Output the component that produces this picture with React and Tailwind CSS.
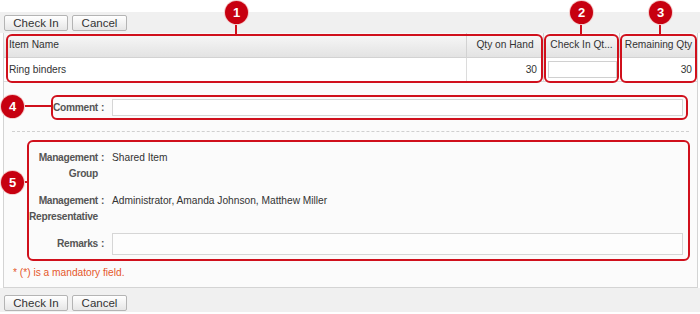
import React from "react";

const font = { fontFamily: '"Liberation Sans", Arial, sans-serif' };

function Btn({ children, w }) {
  return (
    <button
      className={`h-[16px] ${w} rounded-[2px] border border-[#b4b4b4] bg-gradient-to-b from-white to-[#e6e6e6] text-[11.5px] leading-[14px] text-[#333]`}
    >
      {children}
    </button>
  );
}

function Badge({ n, className }) {
  return (
    <div
      className={`absolute flex h-[23px] w-[23px] items-center justify-center rounded-full bg-[#c70010] text-[13px] font-bold text-white shadow-[0_0_0_1px_#f3caca] ${className}`}
    >
      {n}
    </div>
  );
}

function Label({ lines }) {
  return (
    <div className="flex w-[101px] shrink-0 justify-end pr-[1px] font-bold tracking-[-0.3px] text-[#555]">
      <div className="text-right leading-[16px]">
        {lines.map((l, i) => (
          <div key={i}>{l}</div>
        ))}
      </div>
      <span className="ml-[3px] leading-[16px]">:</span>
    </div>
  );
}

export default function App() {
  return (
    <div className="relative h-[314px] w-[700px] overflow-hidden bg-white text-[10.2px] text-[#333]" style={font}>
      <div className="h-[12px] bg-white" />
      <div className="flex h-[21px] gap-[4px] bg-[#f0f0f0] px-[4px] pt-[3px]">
        <Btn w="w-[64px]">Check In</Btn>
        <Btn w="w-[55px]">Cancel</Btn>
      </div>

      <div className="ml-[3px] w-[695px] border-x border-b border-[#d4d4d4] bg-[#fbfbfb]">
        {/* table */}
        <div className="grid grid-cols-[463px_77px_76px_1fr] border-b border-[#dcdcdc]">
          <div className="flex h-[25px] items-center border-b border-r border-[#d2d2d2] bg-gradient-to-b from-[#f8f8f8] to-[#e3e3e3] px-[5px]">Item Name</div>
          <div className="flex h-[25px] items-center justify-center border-b border-r border-[#d2d2d2] bg-gradient-to-b from-[#f8f8f8] to-[#e3e3e3]">Qty on Hand</div>
          <div className="flex h-[25px] items-center justify-center border-b border-r border-[#d2d2d2] bg-gradient-to-b from-[#f8f8f8] to-[#e3e3e3]">Check In Qt...</div>
          <div className="flex h-[25px] items-center justify-center border-b border-[#d2d2d2] bg-gradient-to-b from-[#f8f8f8] to-[#e3e3e3]">Remaining Qty</div>
          <div className="flex h-[23px] items-center border-r border-[#dcdcdc] bg-white px-[5px]">Ring binders</div>
          <div className="flex h-[23px] items-center justify-end border-r border-[#dcdcdc] bg-white pr-[6px]">30</div>
          <div className="flex h-[23px] items-center bg-white pl-[4px]">
            <div className="h-[17px] w-[69px] border border-[#d0d0d0] bg-white" />
          </div>
          <div className="flex h-[23px] items-center justify-end bg-white pr-[5px]">30</div>
        </div>

        {/* comment */}
        <div className="flex items-center pt-[17px]">
          <Label lines={["Comment"]} />
          <div className="ml-[7px] h-[17px] w-[571px] border border-[#d6d6d6] bg-white" />
        </div>

        <div className="mx-[8px] mt-[15px] border-t border-dashed border-[#d0d0d0]" />

        {/* details */}
        <div className="pt-[18px]">
          <div className="flex">
            <Label lines={["Management", "Group"]} />
            <div className="ml-[7px] leading-[16px]">Shared Item</div>
          </div>
          <div className="mt-[11px] flex">
            <Label lines={["Management", "Representative"]} />
            <div className="ml-[7px] leading-[16px]">Administrator, Amanda Johnson, Matthew Miller</div>
          </div>
          <div className="mt-[8px] flex items-center">
            <Label lines={["Remarks"]} />
            <div className="ml-[7px] h-[22px] w-[571px] border border-[#d6d6d6] bg-[#fdfdfd]" />
          </div>
          <div className="mt-[10px] pb-[6px] pl-[9px] leading-[16px] text-[#e5582c]">* (*) is a mandatory field.</div>
        </div>
      </div>

      <div className="flex h-[24px] gap-[4px] bg-[#f0f0f0] px-[4px] pt-[7px]">
        <Btn w="w-[64px]">Check In</Btn>
        <Btn w="w-[55px]">Cancel</Btn>
      </div>

      {/* annotations */}
      <div className="absolute left-[6px] top-[34px] h-[49px] w-[537px] rounded-[6px] border-2 border-[#d0101c]" />
      <div className="absolute left-[544px] top-[34px] h-[49px] w-[75px] rounded-[6px] border-2 border-[#d0101c]" />
      <div className="absolute left-[620px] top-[34px] h-[49px] w-[77px] rounded-[6px] border-2 border-[#d0101c]" />
      <div className="absolute left-[51px] top-[95px] h-[25px] w-[637px] rounded-[6px] border-2 border-[#d0101c]" />
      <div className="absolute left-[27px] top-[140px] h-[121px] w-[663px] rounded-[6px] border-2 border-[#d0101c]" />

      <div className="absolute left-[235px] top-[22px] h-[13px] w-[2px] bg-[#d0101c]" />
      <div className="absolute left-[580px] top-[22px] h-[13px] w-[2px] bg-[#d0101c]" />
      <div className="absolute left-[659px] top-[22px] h-[13px] w-[2px] bg-[#d0101c]" />
      <div className="absolute left-[22px] top-[105px] h-[2px] w-[30px] bg-[#d0101c]" />
      <div className="absolute left-[22px] top-[181px] h-[2px] w-[6px] bg-[#d0101c]" />

      <Badge n="1" className="left-[225px] top-[1px]" />
      <Badge n="2" className="left-[570px] top-[1px]" />
      <Badge n="3" className="left-[649px] top-[1px]" />
      <Badge n="4" className="left-[1px] top-[95px]" />
      <Badge n="5" className="left-[1px] top-[171px]" />
    </div>
  );
}
